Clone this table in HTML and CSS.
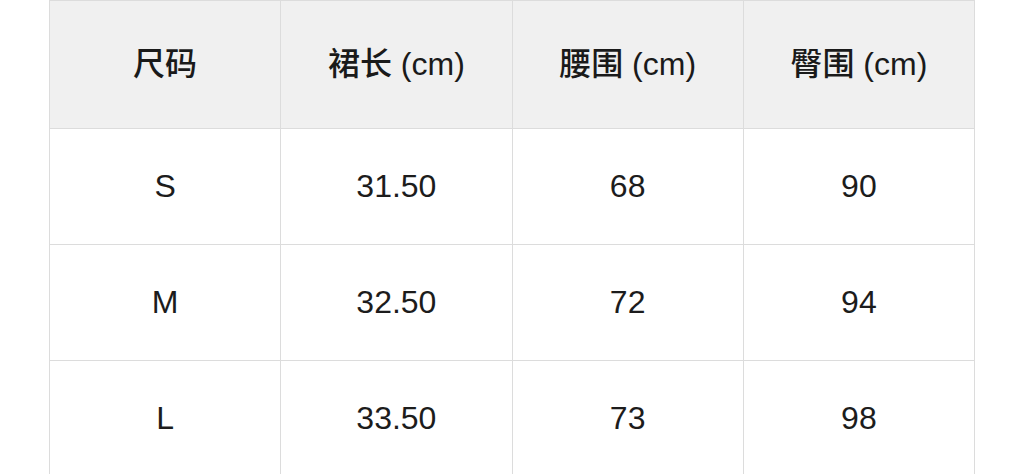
FILE: index.html
```html
<!DOCTYPE html>
<html lang="zh">
<head>
<meta charset="utf-8">
<link rel="stylesheet" href="styles.css">
</head>
<body>
<table class="size-table">
  <thead>
    <tr>
      <th>尺码</th>
      <th>裙长 (cm)</th>
      <th>腰围 (cm)</th>
      <th>臀围 (cm)</th>
    </tr>
  </thead>
  <tbody>
    <tr><td>S</td><td>31.50</td><td>68</td><td>90</td></tr>
    <tr><td>M</td><td>32.50</td><td>72</td><td>94</td></tr>
    <tr><td>L</td><td>33.50</td><td>73</td><td>98</td></tr>
  </tbody>
</table>
</body>
</html>
```
FILE: styles.css
```css
html, body {
  margin: 0;
  padding: 0;
  background: #ffffff;
}
body {
  padding-left: 49px;
  font-family: "Liberation Sans", "Noto Sans CJK SC", sans-serif;
  color: #1c1c1c;
}
.size-table {
  border-collapse: collapse;
  table-layout: fixed;
  width: 926px;
}
.size-table th,
.size-table td {
  border: 1px solid #dcdcdc;
  text-align: center;
  vertical-align: middle;
  padding: 0;
  font-size: 32px;
}
.size-table th {
  height: 119px;
  padding-bottom: 8px;
  background: #f0f0f0;
  font-weight: 500;
  color: #1a1a1a;
}
.size-table td {
  height: 115px;
  font-weight: 400;
}
```
